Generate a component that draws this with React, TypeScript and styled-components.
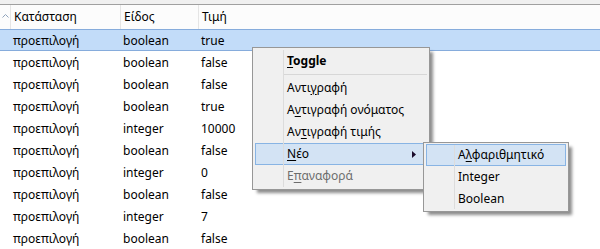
import React from 'react';
import styled, { createGlobalStyle } from 'styled-components';

const GlobalStyle = createGlobalStyle`
  html, body {
    margin: 0;
    padding: 0;
    background: #fff;
    overflow: hidden;
  }
  body {
    font-family: "Noto Sans", "Liberation Sans", sans-serif;
    font-size: 12px;
    color: #000;
  }
`

const Page = styled.div`
  position: relative;
  width: 600px;
  height: 249px;
  overflow: hidden;
`

const TopStrip = styled.div`
  height: 4px;
  background: #f0f0f0;
  border-bottom: 1px solid #a0a0a0;
`

const Grid = styled.div`
  display: grid;
  grid-template-columns: 10px 110px 78px 1fr;
`

const Header = styled(Grid)`
  height: 24px;
  background: #fcfcfc;
  align-items: stretch;
`

const HeaderCell = styled.div`
  display: flex;
  align-items: center;
  border-left: 1px solid #e5e5e5;
  padding-left: 3px;
  padding-bottom: 1px;
`

const SortCell = styled.div`
  display: flex;
  justify-content: center;
  align-items: center;
  padding-bottom: 3px;
`

const Row = styled(Grid)<{ selected?: boolean }>`
  height: 22px;
  box-sizing: border-box;
  align-items: center;
  background: ${({ selected }) => (selected ? '#c2dcf9' : '#fff')};
  border-top: 1px solid ${({ selected }) => (selected ? '#86acdc' : 'transparent')};
  border-bottom: 1px solid ${({ selected }) => (selected ? '#86acdc' : 'transparent')};
`

const Cell = styled.div`
  padding-left: 3px;
  white-space: nowrap;
`

const Menu = styled.div<{ width: number }>`
  position: absolute;
  box-sizing: border-box;
  width: ${({ width }) => width}px;
  background: #f0f0f0;
  border: 1px solid #979797;
  padding: 2px 2px 2px 2px;
  box-shadow: 4px 4px 3px -1px rgba(0, 0, 0, 0.45);

  &::after {
    content: '';
    position: absolute;
    left: 30px;
    top: 2px;
    bottom: 2px;
    width: 1px;
    background: #dcdcdc;
    z-index: 1;
  }
`

const MainMenu = styled(Menu)`
  left: 252px;
  top: 47px;
`

const SubMenu = styled(Menu)`
  left: calc(100% - 3px);
  top: -2px;
  padding: 1px 2px;
`

const Item = styled.div<{ active?: boolean; disabled?: boolean; bold?: boolean }>`
  position: relative;
  height: 22px;
  box-sizing: border-box;
  display: flex;
  align-items: center;
  padding-left: 31px;
  padding-bottom: 1px;
  white-space: nowrap;
  font-weight: ${({ bold }) => (bold ? 700 : 400)};
  color: ${({ disabled }) => (disabled ? '#6d6d6d' : '#000')};
  background: ${({ active }) => (active ? '#d3e3f4' : 'transparent')};
  border: 1px solid ${({ active }) => (active ? '#88b4e4' : 'transparent')};

  u {
    text-decoration-thickness: 1px;
    text-underline-offset: 2px;
  }
`

const Separator = styled.div`
  height: 5px;
  display: flex;
  align-items: center;
  padding-left: 29px;

  &::before {
    content: '';
    flex: 1;
    height: 1px;
    background: #d7d7d7;
  }
`

const Arrow = styled.svg`
  position: absolute;
  right: 10px;
  top: 7px;
`

const rows: [string, string, boolean?][] = [
  ['boolean', 'true', true],
  ['boolean', 'false'],
  ['boolean', 'false'],
  ['boolean', 'true'],
  ['integer', '10000'],
  ['boolean', 'false'],
  ['integer', '0'],
  ['boolean', 'false'],
  ['integer', '7'],
  ['boolean', 'false'],
]

function App(): JSX.Element {
  return (
    <Page>
      <GlobalStyle />
      <TopStrip />
      <Header>
        <SortCell>
          <svg width="7" height="4" viewBox="0 0 7 4">
            <path d="M0.5 3.5 L3.5 0.5 L6.5 3.5" fill="none" stroke="#8ea2bb" strokeWidth="1" />
          </svg>
        </SortCell>
        <HeaderCell>Κατάσταση</HeaderCell>
        <HeaderCell>Είδος</HeaderCell>
        <HeaderCell>Τιμή</HeaderCell>
      </Header>

      {rows.map(([kind, value, selected], i) => (
        <Row key={i} selected={selected}>
          <div />
          <Cell>προεπιλογή</Cell>
          <Cell>{kind}</Cell>
          <Cell>{value}</Cell>
        </Row>
      ))}

      <MainMenu width={178}>
        <Item bold><span><u>T</u>oggle</span></Item>
        <Separator />
        <Item><span>Αντι<u>γ</u>ραφή</span></Item>
        <Item><span>Α<u>ν</u>τιγραφή ονόματος</span></Item>
        <Item><span>Αν<u>τ</u>ιγραφή τιμής</span></Item>
        <Item active>
          <span><u>Ν</u>έο</span>
          <Arrow width="4" height="7" viewBox="0 0 4 7">
            <path d="M0 0 L4 3.5 L0 7 Z" fill="#1a0a2a" />
          </Arrow>
          <SubMenu width={146}>
            <Item active><span>Α<u>λ</u>φαριθμητικό</span></Item>
            <Item><span>Integer</span></Item>
            <Item><span>Boolean</span></Item>
          </SubMenu>
        </Item>
        <Item disabled><span>Ε<u>π</u>αναφορά</span></Item>
      </MainMenu>
    </Page>
  );
}

export default App;
